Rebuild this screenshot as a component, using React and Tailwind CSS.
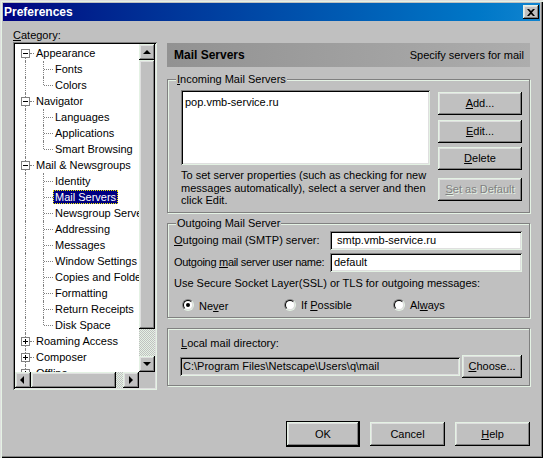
import React from 'react';

const raised =
  'bg-[#c0c0c0] shadow-[inset_-1px_-1px_#000,inset_1px_1px_#e4f2e4,inset_-2px_-2px_#808080,inset_2px_2px_#dfdfdf]';
const sunken =
  'shadow-[inset_1px_1px_#808080,inset_-1px_-1px_#e4f2e4,inset_2px_2px_#000,inset_-2px_-2px_#dfdfdf]';
const etched = 'relative border border-[#808080] shadow-[inset_1px_1px_#e4f2e4,1px_1px_#e4f2e4]';
const checker =
  'bg-[image:repeating-conic-gradient(#e4f2e4_0_25%,#c0c0c0_0_50%)] bg-[length:2px_2px]';

const tree = [
  { t: 'Appearance', l: 0, open: true },
  { t: 'Fonts', l: 1 },
  { t: 'Colors', l: 1, last: true },
  { t: 'Navigator', l: 0, open: true },
  { t: 'Languages', l: 1 },
  { t: 'Applications', l: 1 },
  { t: 'Smart Browsing', l: 1, last: true },
  { t: 'Mail & Newsgroups', l: 0, open: true },
  { t: 'Identity', l: 1 },
  { t: 'Mail Servers', l: 1, sel: true },
  { t: 'Newsgroup Servers', l: 1 },
  { t: 'Addressing', l: 1 },
  { t: 'Messages', l: 1 },
  { t: 'Window Settings', l: 1 },
  { t: 'Copies and Folders', l: 1 },
  { t: 'Formatting', l: 1 },
  { t: 'Return Receipts', l: 1 },
  { t: 'Disk Space', l: 1, last: true },
  { t: 'Roaming Access', l: 0 },
  { t: 'Composer', l: 0 },
  { t: 'Offline', l: 0 },
];

function Arrow({ dir }) {
  const pts = {
    up: '4,1 0,5 8,5',
    down: '0,1 8,1 4,5',
    left: '4,0 4,8 0,4',
    right: '1,0 1,8 5,4',
  }[dir];
  const w = dir === 'up' || dir === 'down' ? 8 : 6;
  const h = dir === 'up' || dir === 'down' ? 6 : 8;
  return (
    <svg width={w} height={h} viewBox={`0 0 ${w} ${h}`}>
      <polygon points={pts} fill="#000" />
    </svg>
  );
}

function ExpandBox({ open }) {
  return (
    <svg width="9" height="9" className="absolute left-[6px] top-[4px]">
      <rect x="0.5" y="0.5" width="8" height="8" fill="#fff" stroke="#808080" />
      <path d="M2 4.5h5" stroke="#000" />
      {!open && <path d="M4.5 2v5" stroke="#000" />}
    </svg>
  );
}

function TreeRow({ it, i }) {
  return (
    <div className="relative h-[16px] flex items-center whitespace-nowrap">
      <span
        className={`absolute left-[10px] bottom-0 border-l border-dotted border-[#808080] ${
          i === 0 ? 'top-[8px]' : 'top-0'
        }`}
      />
      {it.l === 0 ? (
        <>
          <span className="absolute left-[15px] top-[8px] w-[4px] border-t border-dotted border-[#808080]" />
          <ExpandBox open={it.open} />
          <span className="ml-[19px] px-[2px] leading-[14px]">{it.t}</span>
        </>
      ) : (
        <>
          <span
            className={`absolute left-[28px] top-0 border-l border-dotted border-[#808080] ${
              it.last ? 'h-[8px]' : 'bottom-0'
            }`}
          />
          <span className="absolute left-[29px] top-[8px] w-[9px] border-t border-dotted border-[#808080]" />
          <span
            className={`ml-[38px] px-[2px] h-[14px] leading-[14px] ${
              it.sel ? 'bg-[#000080] text-white outline-1 outline-dotted outline-[#f0f000] -outline-offset-1' : ''
            }`}
          >
            {it.t}
          </span>
        </>
      )}
    </div>
  );
}

function TreeBox() {
  return (
    <div className={`w-[144px] h-[348px] p-[2px] bg-white ${sunken}`}>
      <div className="flex">
        <div className="w-[124px] h-[328px] overflow-hidden pt-[1px]">
          {tree.map((it, i) => (
            <TreeRow key={it.t} it={it} i={i} />
          ))}
        </div>
        <div className="w-[16px] h-[328px] flex flex-col">
          <div className={`h-[16px] flex items-center justify-center ${raised}`}>
            <Arrow dir="up" />
          </div>
          <div className={`h-[269px] ${raised}`} />
          <div className={`flex-1 ${checker}`} />
          <div className={`h-[16px] flex items-center justify-center ${raised}`}>
            <Arrow dir="down" />
          </div>
        </div>
      </div>
      <div className="flex h-[16px]">
        <div className="w-[124px] flex">
          <div className={`w-[16px] flex items-center justify-center ${raised}`}>
            <Arrow dir="left" />
          </div>
          <div className={`w-[85px] ${raised}`} />
          <div className={`flex-1 ${checker}`} />
          <div className={`w-[16px] flex items-center justify-center ${raised}`}>
            <Arrow dir="right" />
          </div>
        </div>
        <div className="w-[16px] bg-[#c0c0c0]" />
      </div>
    </div>
  );
}

function Btn({ children, className = '', disabled }) {
  return (
    <div
      className={`flex items-center justify-center ${raised} ${className} ${
        disabled ? 'text-[#808080] [text-shadow:1px_1px_#e4f2e4]' : ''
      }`}
    >
      {children}
    </div>
  );
}

function Radio({ checked }) {
  return (
    <div className="w-[12px] h-[12px] rounded-full border border-t-[#808080] border-l-[#808080] border-r-[#e4f2e4] border-b-[#e4f2e4]">
      <div className="w-[10px] h-[10px] rounded-full bg-white border border-t-black border-l-black border-r-[#dfdfdf] border-b-[#dfdfdf] flex items-center justify-center">
        {checked && <div className="w-[4px] h-[4px] rounded-full bg-black" />}
      </div>
    </div>
  );
}

function GroupLabel({ children }) {
  return (
    <span className="absolute left-[8px] -top-[7px] px-[1px] leading-[13px] bg-[#c0c0c0]">{children}</span>
  );
}

export default function App() {
  return (
    <div className="w-[543px] h-[458px] bg-[#c0c0c0] p-[3px] pb-0 text-[11px] text-black font-['Liberation_Sans',Arial,sans-serif] shadow-[inset_1px_1px_#dfdfdf,inset_2px_2px_#e4f2e4,inset_-1px_-1px_#000,inset_-2px_-2px_#808080] overflow-hidden">
      {/* title bar */}
      <div className="h-[18px] flex items-center justify-between pl-[1px] pr-[1px] bg-linear-to-r from-[#000080] to-[#1084d0]">
        <span className="text-white font-bold text-[12px] leading-none">Preferences</span>
        <div className={`w-[16px] h-[14px] flex items-center justify-center ${raised}`}>
          <svg width="8" height="7" viewBox="0 0 8 7">
            <path d="M0 0h2l2 2 2-2h2l-3 3.5 3 3.5h-2l-2-2-2 2h-2l3-3.5z" fill="#000" />
          </svg>
        </div>
      </div>

      <div className="flex pl-[10px] mt-[7px]">
        {/* left: category tree */}
        <div className="w-[144px]">
          <div className="h-[14px] leading-[14px]">
            <u>C</u>ategory:
          </div>
          <TreeBox />
        </div>

        {/* right panel */}
        <div className="ml-[10px] w-[363px] pt-[15px]">
          <div className="h-[24px] flex items-center justify-between pl-[7px] pr-[6px] bg-linear-to-r from-[#929292] to-[#adadad]">
            <span className="font-bold text-[12px]">Mail Servers</span>
            <span>Specify servers for mail</span>
          </div>

          {/* incoming */}
          <div className={`mt-[12px] h-[134px] ${etched}`}>
            <GroupLabel>
              <u>I</u>ncoming Mail Servers
            </GroupLabel>
            <div className="flex pl-[13px] pt-[10px]">
              <div className="w-[249px]">
                <div className={`h-[75px] bg-white pl-[4px] pt-[6px] leading-[13px] ${sunken}`}>
                  pop.vmb-service.ru
                </div>
                <div className="mt-[4px] leading-[12.5px]">
                  To set server properties (such as checking for new messages automatically), select a server and then
                  click Edit.
                </div>
              </div>
              <div className="ml-[8px] w-[84px] pt-[2px] flex flex-col">
                <Btn className="h-[23px]">
                  <span>
                    <u>A</u>dd...
                  </span>
                </Btn>
                <Btn className="h-[23px] mt-[5px]">
                  <span>
                    <u>E</u>dit...
                  </span>
                </Btn>
                <Btn className="h-[23px] mt-[4px]">
                  <span>
                    <u>D</u>elete
                  </span>
                </Btn>
                <Btn className="h-[23px] mt-[8px]" disabled>
                  <span>
                    <u>S</u>et as Default
                  </span>
                </Btn>
              </div>
            </div>
          </div>

          {/* outgoing */}
          <div className={`mt-[10px] h-[95px] ${etched}`}>
            <GroupLabel>Outgoing Mail Server</GroupLabel>
            <div className="pl-[6px] pt-[7px]">
              <div className="flex items-center h-[19px]">
                <span className="w-[156px]">
                  <u>O</u>utgoing mail (SMTP) server:
                </span>
                <div className={`w-[192px] h-[19px] bg-white pl-[7px] leading-[19px] ${sunken}`}>
                  smtp.vmb-service.ru
                </div>
              </div>
              <div className="flex items-center h-[19px] mt-[3px]">
                <span className="w-[156px] whitespace-nowrap tracking-[-0.3px]">
                  Outgoing <u>m</u>ail server user name:
                </span>
                <div className={`w-[192px] h-[19px] bg-white pl-[4px] leading-[19px] ${sunken}`}>default</div>
              </div>
              <div className="mt-[5px] leading-[13px]">Use Secure Socket Layer(SSL) or TLS for outgoing messages:</div>
              <div className="flex items-center h-[16px] mt-[7px] pl-[8px]">
                <div className="w-[102px] flex items-center gap-[5px]">
                  <Radio checked />
                  <span className="mt-[2px]">
                    Ne<u>v</u>er
                  </span>
                </div>
                <div className="w-[109px] flex items-center gap-[5px]">
                  <Radio />
                  <span>
                    If <u>P</u>ossible
                  </span>
                </div>
                <div className="flex items-center gap-[5px]">
                  <Radio />
                  <span>
                    Al<u>w</u>ays
                  </span>
                </div>
              </div>
            </div>
          </div>

          {/* local dir */}
          <div className={`mt-[10px] h-[58px] ${etched}`}>
            <div className="pl-[13px] pt-[8px] leading-[13px]">
              <u>L</u>ocal mail directory:
            </div>
            <div className="flex items-center pl-[12px] mt-[5px]">
              <div className={`w-[280px] h-[19px] bg-[#c0c0c0] pl-[3px] leading-[19px] ${sunken}`}>
                {'C:\\Program Files\\Netscape\\Users\\q\\mail'}
              </div>
              <Btn className="ml-[2px] w-[60px] h-[23px]">
                <span>
                  <u>C</u>hoose...
                </span>
              </Btn>
            </div>
          </div>
        </div>
      </div>

      {/* dialog buttons */}
      <div className="flex justify-end items-center gap-[10px] pr-[10px] mt-[31px] h-[26px]">
        <div className="w-[74px] h-[26px] border border-black">
          <Btn className="h-full">OK</Btn>
        </div>
        <Btn className="w-[75px] h-[24px]">Cancel</Btn>
        <Btn className="w-[75px] h-[24px]">
          <span>
            <u>H</u>elp
          </span>
        </Btn>
      </div>
    </div>
  );
}
